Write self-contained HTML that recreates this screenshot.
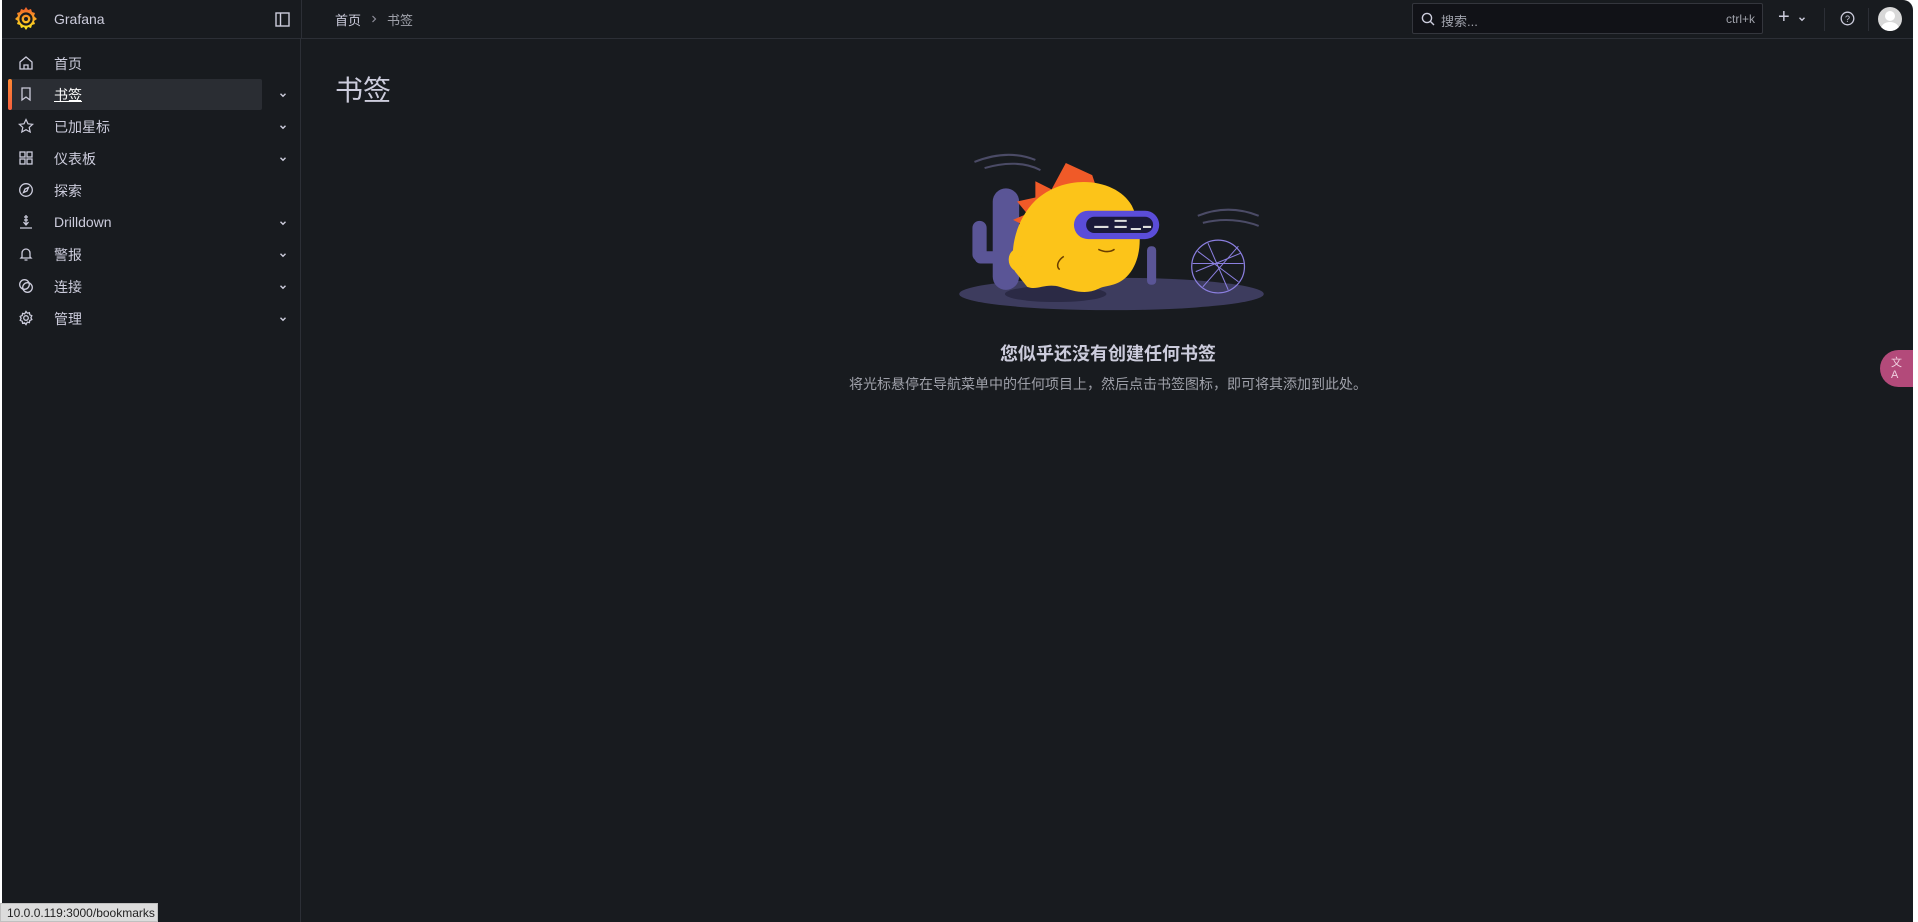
<!DOCTYPE html>
<html><head><meta charset="utf-8"><style>
*{box-sizing:border-box;margin:0;padding:0}
body{width:1918px;height:922px;background:#fff;overflow:hidden;font-family:"Liberation Sans","Noto Sans CJK SC",sans-serif;position:relative}
#app{position:absolute;left:2px;top:0;width:1911px;height:922px;background:#181b1f;border-top-right-radius:10px;overflow:hidden;color:#ccccdc}
#top{position:absolute;left:0;top:0;right:0;height:39px;border-bottom:1px solid #2c2f36}
#side{position:absolute;left:0;top:39px;width:299px;bottom:0;border-right:1px solid #2c2f36}
#top .vsep{position:absolute;left:299px;top:0;height:39px;width:1px;background:#2c2f36}
.item{position:absolute;left:6px;width:254px;height:31px;font-size:14px;color:#ccccdc}
.item .t{position:absolute;left:46px;top:6px}
.item svg.ic{position:absolute;left:10px;top:7px}
.chev{position:absolute;left:276px;width:10px;height:10px}
.act{background:#2a2d33;border-radius:2px}
.act:before{content:"";position:absolute;left:0;top:0;width:4px;height:31px;background:linear-gradient(#ff8833,#f55f3e);border-radius:2px}
</style></head><body>
<svg width="0" height="0" style="position:absolute"><defs><symbol id="cv" viewBox="0 0 10 10"><path d="M2.5 3.8L5 6.3 7.5 3.8" fill="none" stroke="#ccccdc" stroke-width="1.4"/></symbol></defs></svg>
<div id="app">
<div id="top">
  <svg style="position:absolute;left:12px;top:6px" width="24" height="26" viewBox="0 0 24 26"><defs><linearGradient id="g" x1="0" y1="1" x2="0" y2="0"><stop offset="0" stop-color="#fcee1f"/><stop offset="1" stop-color="#f15b2a"/></linearGradient></defs><path d="M12 1l2 3 3-1 1 3 3 1-1 3 3 3-3 2 1 3-3 1-1 3-3-1-2 3-2-3-3 1-1-3-3-1 1-3-3-2 3-3-1-3 3-1 1-3 3 1z" fill="url(#g)"/><circle cx="12" cy="13" r="5.5" fill="none" stroke="#181b1f" stroke-width="2.2"/><circle cx="12" cy="13" r="2" fill="#181b1f"/></svg>
  <div style="position:absolute;left:52px;top:11px;font-size:14px;color:#ccccdc">Grafana</div>
  <svg style="position:absolute;left:273px;top:12px" width="15" height="15" viewBox="0 0 15 15"><rect x="1" y="1" width="13" height="13" fill="none" stroke="#ccccdc" stroke-width="1.4"/><line x1="5.5" y1="1" x2="5.5" y2="14" stroke="#ccccdc" stroke-width="1.4"/></svg>
  <div class="vsep"></div>
  <div style="position:absolute;left:333px;top:10px;font-size:13px;color:#ccccdc">首页</div>
  <svg style="position:absolute;left:368px;top:14px" width="8" height="10" viewBox="0 0 8 10"><path d="M2.5 2l3 3-3 3" fill="none" stroke="#8e8e9a" stroke-width="1.2"/></svg>
  <div style="position:absolute;left:385px;top:10px;font-size:13px;color:#9fa1aa">书签</div>
  <div style="position:absolute;left:1410px;top:3px;width:351px;height:31px;background:#111217;border:1px solid #34363d;border-radius:2px">
    <svg style="position:absolute;left:8px;top:8px" width="14" height="14" viewBox="0 0 14 14"><circle cx="6" cy="6" r="4.6" fill="none" stroke="#ccccdc" stroke-width="1.4"/><line x1="9.5" y1="9.5" x2="13" y2="13" stroke="#ccccdc" stroke-width="1.4"/></svg>
    <div style="position:absolute;left:28px;top:7px;font-size:13px;color:#9fa1aa">搜索...</div>
    <div style="position:absolute;right:7px;top:8px;font-size:12px;color:#9fa1aa">ctrl+k</div>
  </div>
  <div style="position:absolute;left:1776px;top:6px;font-size:20px;color:#ccccdc">+</div>
  <svg style="position:absolute;left:1795px;top:14px" width="10" height="10"><use href="#cv"/></svg>
  <div style="position:absolute;left:1822px;top:8px;width:1px;height:23px;background:#2c2f36"></div>
  <svg style="position:absolute;left:1838px;top:11px" width="15" height="15" viewBox="0 0 15 15"><circle cx="7.5" cy="7.5" r="6.3" fill="none" stroke="#ccccdc" stroke-width="1.3"/><text x="7.5" y="11" font-size="9" text-anchor="middle" fill="#ccccdc" font-family="Liberation Sans">?</text></svg>
  <div style="position:absolute;left:1866px;top:8px;width:1px;height:23px;background:#2c2f36"></div>
  <div style="position:absolute;left:1876px;top:7px;width:24px;height:24px;border-radius:50%;background:#d8d8d8;overflow:hidden"><div style="position:absolute;left:7px;top:4px;width:10px;height:10px;border-radius:50%;background:#fff"></div><div style="position:absolute;left:3px;top:15px;width:18px;height:14px;border-radius:50%;background:#fff"></div></div>
</div>
<div id="side">
  <div class="item" style="top:9px"><svg class="ic" width="16" height="16" viewBox="0 0 16 16" fill="none" stroke="#ccccdc" stroke-width="1.3"><path d="M2 7l6-5 6 5v7H2z"/><path d="M6 14v-4h4v4"/></svg><span class="t">首页</span></div>
  <div class="item act" style="top:40px"><svg class="ic" width="16" height="16" viewBox="0 0 16 16" fill="none" stroke="#ccccdc" stroke-width="1.3"><path d="M4 2h8v12l-4-3-4 3z"/></svg><span class="t" style="text-decoration:underline;color:#fff">书签</span></div>
  <svg class="chev" style="top:51px"><use href="#cv"/></svg>
  <div class="item" style="top:72px"><svg class="ic" width="16" height="16" viewBox="0 0 16 16" fill="none" stroke="#ccccdc" stroke-width="1.2"><path d="M8 1.5l2 4.3 4.6.5-3.4 3.1 1 4.6L8 11.7 3.8 14l1-4.6L1.4 6.3 6 5.8z"/></svg><span class="t">已加星标</span></div>
  <svg class="chev" style="top:83px"><use href="#cv"/></svg>
  <div class="item" style="top:104px"><svg class="ic" width="16" height="16" viewBox="0 0 16 16" fill="none" stroke="#ccccdc" stroke-width="1.3"><rect x="2" y="2" width="5" height="5"/><rect x="9" y="2" width="5" height="5"/><rect x="2" y="9" width="5" height="5"/><rect x="9" y="9" width="5" height="5"/></svg><span class="t">仪表板</span></div>
  <svg class="chev" style="top:115px"><use href="#cv"/></svg>
  <div class="item" style="top:136px"><svg class="ic" width="16" height="16" viewBox="0 0 16 16" fill="none" stroke="#ccccdc" stroke-width="1.3"><circle cx="8" cy="8" r="6.3"/><path d="M10.5 5.5l-1.5 3.5-3.5 1.5 1.5-3.5z"/></svg><span class="t">探索</span></div>
  <div class="item" style="top:168px"><svg class="ic" width="16" height="16" viewBox="0 0 16 16" fill="none" stroke="#ccccdc" stroke-width="1.3"><path d="M8 1v9M6 3h4M6 6h4M5.5 8l2.5 3 2.5-3M2 14h12"/></svg><span class="t" style="top:7px">Drilldown</span></div>
  <svg class="chev" style="top:179px"><use href="#cv"/></svg>
  <div class="item" style="top:200px"><svg class="ic" width="16" height="16" viewBox="0 0 16 16" fill="none" stroke="#ccccdc" stroke-width="1.3"><path d="M4 11V7a4 4 0 018 0v4l1 1H3zM6.5 14h3"/></svg><span class="t">警报</span></div>
  <svg class="chev" style="top:211px"><use href="#cv"/></svg>
  <div class="item" style="top:232px"><svg class="ic" width="16" height="16" viewBox="0 0 16 16" fill="none" stroke="#ccccdc" stroke-width="1.3"><circle cx="6.5" cy="6.5" r="4.8"/><circle cx="9.5" cy="9.5" r="4.8"/></svg><span class="t">连接</span></div>
  <svg class="chev" style="top:243px"><use href="#cv"/></svg>
  <div class="item" style="top:264px"><svg class="ic" width="16" height="16" viewBox="0 0 16 16" fill="none" stroke="#ccccdc" stroke-width="1.3"><circle cx="8" cy="8" r="2.3"/><path d="M8 1.5l1.3 1.7 2.1-.5.4 2.1 2 .9-.9 2 .9 1.9-2 .9-.4 2.1-2.1-.5L8 14.5l-1.3-1.7-2.1.5-.4-2.1-2-.9.9-2-.9-1.9 2-.9.4-2.1 2.1.5z"/></svg><span class="t">管理</span></div>
  <svg class="chev" style="top:275px"><use href="#cv"/></svg>
</div>
<div style="position:absolute;left:333px;top:69px;font-size:28px;color:#ccccdc">书签</div>
<svg style="position:absolute;left:942px;top:139px" width="335" height="184" viewBox="0 0 330 180">
  <path d="M30 22c20-8 40-10 60-2M40 28c20-6 40-6 55 2" stroke="#4b4b66" stroke-width="2" fill="none"/>
  <path d="M250 75c20-8 40-8 60 0M255 82c20-5 40-3 55 3" stroke="#4b4b66" stroke-width="2" fill="none"/>
  <ellipse cx="165" cy="152" rx="150" ry="16" fill="#3d3c5e"/>
  <ellipse cx="110" cy="152" rx="50" ry="8" fill="#2b2a45"/>
  <rect x="48" y="48" width="26" height="100" rx="13" fill="#5a5596"/>
  <rect x="28" y="80" width="14" height="40" rx="7" fill="#5a5596"/>
  <rect x="30" y="110" width="30" height="12" rx="6" fill="#5a5596"/>
  <rect x="200" y="105" width="9" height="38" rx="4" fill="#5a5596"/>
  <path d="M80 85l-12-6 14-6-10-12 18-4 0-16 16 8 14-26 26 12 6 18c-20-4-50 4-70 22z" fill="#f05a28"/>
  <path d="M70 130c-6-20 0-50 20-70 30-28 80-22 95 5 12 25 10 55-5 70-10 10-20 8-28 12-12 6-25 2-38-2-14-4-22 4-32 0z" fill="#fcc419"/>
  <path d="M80 128c-18 0-14-22-2-16" stroke="#fcc419" stroke-width="8" fill="none"/>
  <rect x="128" y="70" width="84" height="28" rx="14" fill="#5b4dd9"/>
  <rect x="140" y="76" width="66" height="16" rx="8" fill="#1b1a3a"/>
  <path d="M148 86h14M168 80h12M168 86h12M184 88h10M196 86h8" stroke="#ddd" stroke-width="2"/>
  <path d="M152 108c6 3 12 3 16 0" stroke="#6a3e00" stroke-width="1.5" fill="none"/>
  <path d="M118 115c-6 4-8 10-4 13" stroke="#6a3e00" stroke-width="1.5" fill="none"/>
  <circle cx="270" cy="125" r="26" fill="none" stroke="#8b7fe0" stroke-width="1.2"/>
  <path d="M250 110l40 30M248 130l44-18M260 102l20 46M255 145l35-40M245 122h50" stroke="#8b7fe0" stroke-width="1"/>
</svg>
<div style="position:absolute;left:0;width:100%;padding-left:301px;top:340px;text-align:center;font-size:18px;color:#ccccdc;font-weight:bold"><span style="position:relative;left:0">您似乎还没有创建任何书签</span></div>
<div style="position:absolute;left:0;width:100%;padding-left:301px;top:374px;text-align:center;font-size:14px;color:#9fa1aa"><span style="position:relative;left:0">将光标悬停在导航菜单中的任何项目上，然后点击书签图标，即可将其添加到此处。</span></div>
<div style="position:absolute;left:1878px;top:350px;width:50px;height:37px;border-radius:19px;background:#b34a7a;color:#f0d0e0;font-size:11px;line-height:12px;padding:7px 0 0 11px">文<br>A</div>
</div>
<div style="position:absolute;left:0;top:903px;width:158px;height:19px;background:#dcdcdc;border:1px solid #c0c0c0;font-size:12px;color:#222;padding:2px 0 0 6px">10.0.0.119:3000/bookmarks</div>
</body></html>
